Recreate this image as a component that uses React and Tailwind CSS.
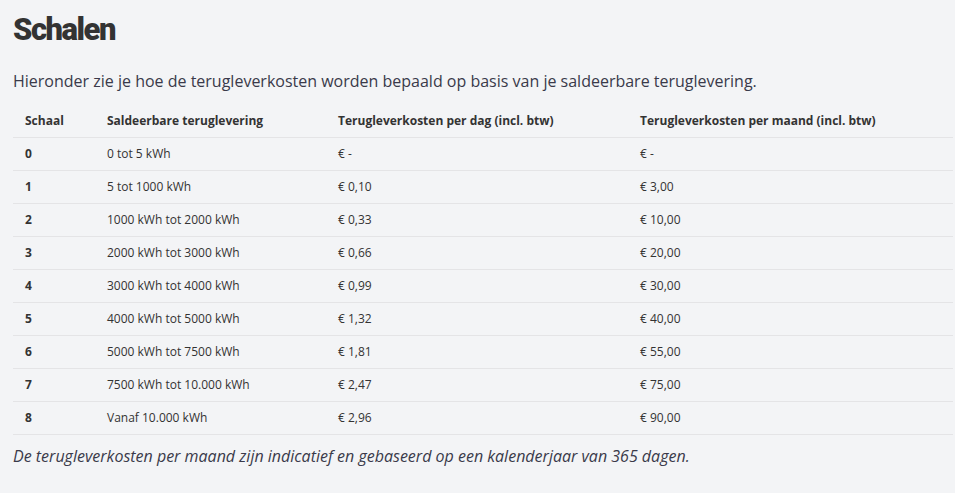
const rows = [
  ['0', '0 tot 5 kWh', '€ -', '€ -'],
  ['1', '5 tot 1000 kWh', '€ 0,10', '€ 3,00'],
  ['2', '1000 kWh tot 2000 kWh', '€ 0,33', '€ 10,00'],
  ['3', '2000 kWh tot 3000 kWh', '€ 0,66', '€ 20,00'],
  ['4', '3000 kWh tot 4000 kWh', '€ 0,99', '€ 30,00'],
  ['5', '4000 kWh tot 5000 kWh', '€ 1,32', '€ 40,00'],
  ['6', '5000 kWh tot 7500 kWh', '€ 1,81', '€ 55,00'],
  ['7', '7500 kWh tot 10.000 kWh', '€ 2,47', '€ 75,00'],
  ['8', 'Vanaf 10.000 kWh', '€ 2,96', '€ 90,00'],
];

export default function App() {
  return (
    <div className="min-h-screen bg-[#f3f4f6] text-[#333] pl-[13px] pr-[2px] pt-[12px]" style={{ fontFamily: '"Open Sans", sans-serif' }}>
      <h1 className="text-[31px] leading-[36px] font-black tracking-[-1.5px] text-[#333] [font-family:Roboto,sans-serif]">Schalen</h1>
      <p className="mt-[22px] text-[16px] leading-[22px] text-[#3a3a4a]">
        Hieronder zie je hoe de terugleverkosten worden bepaald op basis van je saldeerbare teruglevering.
      </p>
      <table className="mt-[14px] w-full border-collapse text-[12px] text-left">
        <thead>
          <tr className="h-[31px] border-b border-[#e4e4e6]">
            <th className="w-[82px] pl-[12px] font-bold">Schaal</th>
            <th className="w-[231px] pl-[12px] font-bold">Saldeerbare teruglevering</th>
            <th className="w-[302px] pl-[12px] font-bold">Terugleverkosten per dag (incl. btw)</th>
            <th className="pl-[12px] font-bold">Terugleverkosten per maand (incl. btw)</th>
          </tr>
        </thead>
        <tbody>
          {rows.map((r) => (
            <tr key={r[0]} className="h-[33px] border-b border-[#e4e4e6]">
              <td className="pl-[12px] font-bold">{r[0]}</td>
              <td className="pl-[12px]">{r[1]}</td>
              <td className="pl-[12px]">{r[2]}</td>
              <td className="pl-[12px]">{r[3]}</td>
            </tr>
          ))}
        </tbody>
      </table>
      <p className="mt-[10px] text-[16px] leading-[22px] italic text-[#3a3a4a]">
        De terugleverkosten per maand zijn indicatief en gebaseerd op een kalenderjaar van 365 dagen.
      </p>
    </div>
  );
}
